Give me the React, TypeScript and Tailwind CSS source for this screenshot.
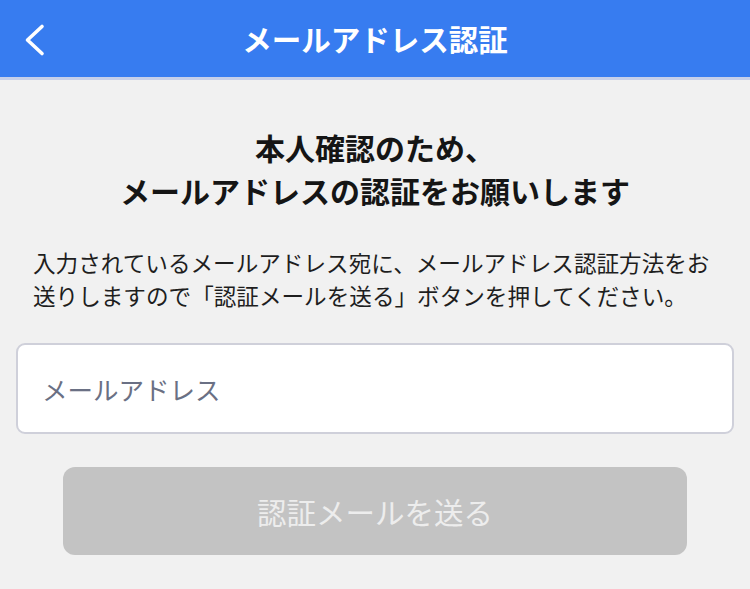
const FONT = '"Noto Sans CJK JP", "Noto Sans", sans-serif';

const BackIcon = () => (
  <svg width="24" height="34" viewBox="0 0 24 34" fill="none" aria-hidden="true">
    <path d="M19 3.5 L4.5 17 L19 30.5" stroke="white" strokeWidth="3.6" strokeLinecap="round" strokeLinejoin="round" />
  </svg>
);

export default function App() {
  return (
    <div className="min-h-[589px] w-[750px] bg-[#f1f1f1]" style={{ fontFamily: FONT }}>
      <header className="relative flex h-[80px] items-center justify-center border-b-[3px] border-[#c6d0ea] bg-[#377cf0]">
        <button type="button" className="absolute left-[23px] top-[23px]" aria-label="戻る">
          <BackIcon />
        </button>
        <h1 className="text-[29.5px] font-bold leading-none text-white">メールアドレス認証</h1>
      </header>

      <main className="flex flex-col items-center pt-[46px]">
        <h2 className="text-center text-[30px] font-bold leading-[43px] text-[#151515]">
          本人確認のため、
          <br />
          メールアドレスの認証をお願いします
        </h2>

        <p className="mt-[34px] w-full px-[33px] text-[22.6px] leading-[33px] text-[#1e1e1e]">
          入力されているメールアドレス宛に、メールアドレス認証方法をお送りしますので「認証メールを送る」ボタンを押してください。
        </p>

        <div className="mt-[31px] w-full px-[16px]">
          <input
            type="email"
            placeholder="メールアドレス"
            className="h-[91px] w-full rounded-[9px] border-2 border-[#cfd0da] bg-white px-[24px] text-[25.5px] text-[#222] outline-none placeholder:text-[#6a7084]"
            style={{ fontFamily: FONT }}
          />
        </div>

        <button
          type="button"
          disabled
          className="mt-[33px] h-[88px] w-[624px] rounded-[12px] bg-[#c3c3c3] text-[29.5px] text-[#ededed]"
          style={{ fontFamily: FONT }}
        >
          認証メールを送る
        </button>
      </main>
    </div>
  );
}
